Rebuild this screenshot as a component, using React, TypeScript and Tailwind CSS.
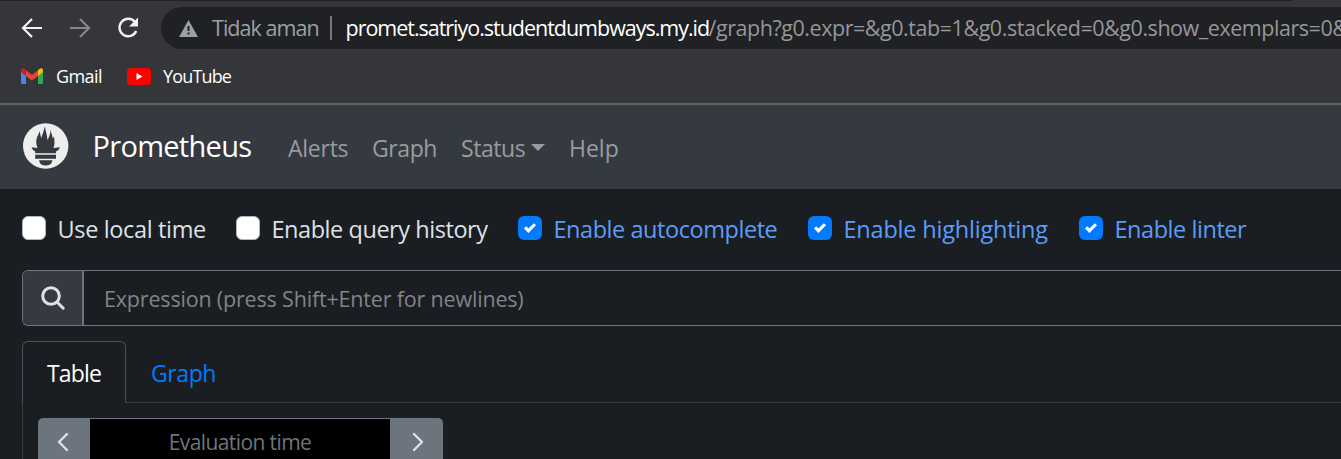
import React from "react";

const line = "whitespace-nowrap leading-none";

function Check({ label, checked, width, tracking }: { label: string; checked?: boolean; width: string; tracking: string }) {
  return (
    <label className={`flex items-center ${width}`}>
      <span
        className={`flex size-6 shrink-0 items-center justify-center rounded-[6px] ${
          checked ? "bg-[#007bff]" : "border border-[#adb5bd] bg-white"
        }`}
      >
        {checked && (
          <svg width="12" height="12" viewBox="0 0 8 8" fill="#fff">
            <path d="M6.564.75l-3.59 3.612-1.538-1.55L0 4.26l2.974 2.99L8 2.193z" />
          </svg>
        )}
      </span>
      <span className={`ml-[11.5px] pt-[3px] text-[23.5px] ${line} ${tracking} ${checked ? "text-[#5a9df8]" : "text-[#dee2e6]"}`}>
        {label}
      </span>
    </label>
  );
}

function Chrome() {
  return (
    <header className="h-[105px] border-b-2 border-[#5f6063] bg-[#35363a]">
      <div className="h-px w-[1293px] bg-[#202124]" />
      <div className="flex h-12 pt-[6px]">
        <div className="flex h-[42px] w-[161px] shrink-0 items-center pl-[20px]">
          <svg width="24" height="24" viewBox="0 0 24 24" fill="none" stroke="#f1f3f4" strokeWidth="2.2">
            <path d="M22 12H3.5M12 3L3 12l9 9" />
          </svg>
          <svg className="ml-[24px]" width="24" height="24" viewBox="0 0 24 24" fill="none" stroke="#86878a" strokeWidth="2.2">
            <path d="M2 12h18.500M12 3l9 9-9 9" />
          </svg>
          <svg className="ml-[24px]" width="24" height="24" viewBox="0 0 24 24" fill="none" stroke="#f1f3f4" strokeWidth="2.4">
            <path d="M18.700 5.700A8.700 8.700 0 1 0 20.200 15" />
            <path d="M22 1.500v9h-9z" fill="#f1f3f4" stroke="none" />
          </svg>
        </div>
        <div className="flex h-[42px] w-[1180px] items-center overflow-hidden rounded-l-full bg-[#202124] pl-[18px]">
          <svg width="19" height="17" viewBox="0 0 19 17" className="shrink-0">
            <path d="M9.500 0L19 17H0z" fill="#9aa0a6" />
            <path d="M8.500 6h2v5h-2zM8.500 12.500h2v2h-2z" fill="#202124" />
          </svg>
          <span className={`ml-[14px] w-[107px] shrink-0 text-[21.500px] tracking-[-0.95px] text-[#9aa0a6] ${line}`}>Tidak aman</span>
          <span className="ml-[11px] h-6 w-[2px] shrink-0 bg-[#77797d]" />
          <span className={`ml-[13.5px] w-[363px] shrink-0 text-[21.500px] tracking-[-1.02px] text-white ${line}`}>
            promet.satriyo.studentdumbways.my.id
          </span>
          <span className={`text-[21.500px] tracking-[-0.45px] text-[#969799] ${line}`}>
            /graph?g0.expr=&amp;g0.tab=1&amp;g0.stacked=0&amp;g0.show_exemplars=0&amp;
          </span>
        </div>
      </div>
      <div className="flex h-[54px] items-center pl-[21px]">
        <svg width="22" height="16" viewBox="0 0 22 16">
          <path d="M0 2v12.500Q0 16 1.500 16H5V6z" fill="#4285f4" />
          <path d="M22 2v12.500Q22 16 20.500 16H17V6z" fill="#34a853" />
          <path d="M17 2.200L19 .6Q22-.5 22 2.500V4l-5 4z" fill="#fbbc04" />
          <path d="M5 2.200L11 7l6-4.800V8l-6 4.500L5 8z" fill="#ea4335" />
          <path d="M5 2.200L3 .6Q0-.5 0 2.500V4l5 4z" fill="#c5221f" />
        </svg>
        <span className={`ml-[13px] w-[46px] pb-px text-[18px] tracking-[-0.6px] text-white ${line}`}>Gmail</span>
        <svg className="ml-[25px]" width="24" height="17" viewBox="0 0 24 17">
          <rect width="24" height="17" rx="4" fill="#f00" />
          <path d="M9.500 5v7l6-3.500z" fill="#fff" />
        </svg>
        <span className={`ml-[12px] pb-px text-[18px] tracking-[-0.85px] text-white ${line}`}>YouTube</span>
      </div>
    </header>
  );
}

function Logo() {
  return (
    <svg width="46" height="46" viewBox="0 0 46 46" className="shrink-0">
      <circle cx="22.700" cy="23" r="22.700" fill="#eee" />
      <g fill="#343a40">
        <path d="M14.500 25C13 21 12.700 18 14 14.500 15 12 16.200 10.500 16.200 8c1 2 1.300 4.500 2 7C20 10.500 20.500 8 22 3.500 22.500 8 24 11 24.500 17c1.500-3 3-6 3.200-10.500C28 10 29.300 12 29.800 15.500L31 13.500C31.500 18 32 20.500 30.500 25L37 24.300Q36 27.500 33 28.500V30.300H12.200V28.500Q9.500 27.500 8.500 24.300z" />
        <path d="M12.200 31.800h20.800v3.900H12.200zM16 37.200h13.500Q28.500 42.500 22.700 42.500T16 37.200z" />
      </g>
    </svg>
  );
}

function Chevron({ d }: { d: string }) {
  return (
    <svg width="12" height="20" viewBox="0 0 12 20" fill="none" stroke="#dee2e6" strokeWidth="2.400" strokeLinecap="round" strokeLinejoin="round">
      <path d={d} />
    </svg>
  );
}

export default function App() {
  return (
    <div className="h-[459px] w-[1341px] overflow-hidden bg-[#1a1d21] font-['Open_Sans',sans-serif]">
      <Chrome />
      <nav className="flex h-[84px] items-center bg-[#343a40] pl-[23px] text-[#999c9f]">
        <div className="pb-[2px]"><Logo /></div>
        <span className={`ml-[23.5px] w-[158.5px] pb-[3px] text-[29px] tracking-[-0.7px] text-white ${line}`}>Prometheus</span>
        <span className={`ml-[37px] w-[60px] pt-[2px] text-[23px] tracking-[-0.25px] ${line}`}>Alerts</span>
        <span className={`ml-[24px] w-[64px] pt-[2px] text-[23px] tracking-[-0.4px] ${line}`}>Graph</span>
        <span className={`ml-[25px] w-[64px] pt-[2px] text-[23px] tracking-[-0.45px] ${line}`}>Status</span>
        <svg className="ml-[6px]" width="14" height="7" viewBox="0 0 14 7"><path d="M0 0h14L7 7z" fill="#999c9f" /></svg>
        <span className={`ml-[24px] pt-[2px] text-[23px] ${line}`}>Help</span>
      </nav>

      <main className="pl-[22px]">
        <div className="flex h-[78px] items-center">
          <Check label="Use local time" width="w-[214px]" tracking="tracking-[-0.35px]" />
          <Check label="Enable query history" width="w-[282px]" tracking="tracking-[-0.45px]" />
          <Check label="Enable autocomplete" width="w-[290px]" tracking="tracking-[-0.45px]" checked />
          <Check label="Enable highlighting" width="w-[271px]" tracking="tracking-[-0.2px]" checked />
          <Check label="Enable linter" width="w-[200px]" tracking="tracking-[-0.45px]" checked />
        </div>

        <div className="mt-[3px] flex h-14 rounded-l-[6px] border border-r-0 border-[#6c757d]">
          <div className="flex w-[61px] items-center justify-center rounded-l-[5px] border-r-2 border-[#6c757d] bg-[#343a40]">
            <svg width="24" height="24" viewBox="0 0 24 24" fill="none" stroke="#dee2e6" strokeWidth="3" strokeLinecap="round">
              <circle cx="10" cy="10" r="8.300" />
              <path d="M16.200 16.200l6 6" />
            </svg>
          </div>
          <div className={`flex items-center pl-[20px] pt-[2px] text-[21.500px] tracking-[-0.18px] text-[#828487] ${line}`}>
            Expression (press Shift+Enter for newlines)
          </div>
        </div>

        <div className="mt-[15px] flex h-[62px]">
          <div className={`flex w-[104px] items-center rounded-t-[6px] border border-b-0 border-[#495057] pl-6 pt-[2px] text-[23px] tracking-[-0.85px] text-white ${line}`}>Table</div>
          <div className={`flex flex-1 items-center border-b border-[#383c40] pl-[25px] pt-1 text-[23px] tracking-[-0.4px] text-[#007bff] ${line}`}>Graph</div>
        </div>

        <div className="flex h-14 border-l border-[#343a40] pl-[15px] pt-[15px]">
          <div className="flex h-12 shrink-0">
            <div className="flex w-[52px] items-center justify-center rounded-tl-[5px] bg-[#6c757d] pr-[2px]"><Chevron d="M10 2L2 10l8 8" /></div>
            <div className={`flex w-[300px] items-center justify-center border-t border-[#6c757d] bg-black text-[21px] tracking-[-0.6px] text-[#6c757d] ${line}`}>Evaluation time</div>
            <div className="flex w-[53px] items-center justify-center rounded-tr-[5px] bg-[#6c757d] pl-[2px]"><Chevron d="M2 2l8 8-8 8" /></div>
          </div>
        </div>
      </main>
    </div>
  );
}
